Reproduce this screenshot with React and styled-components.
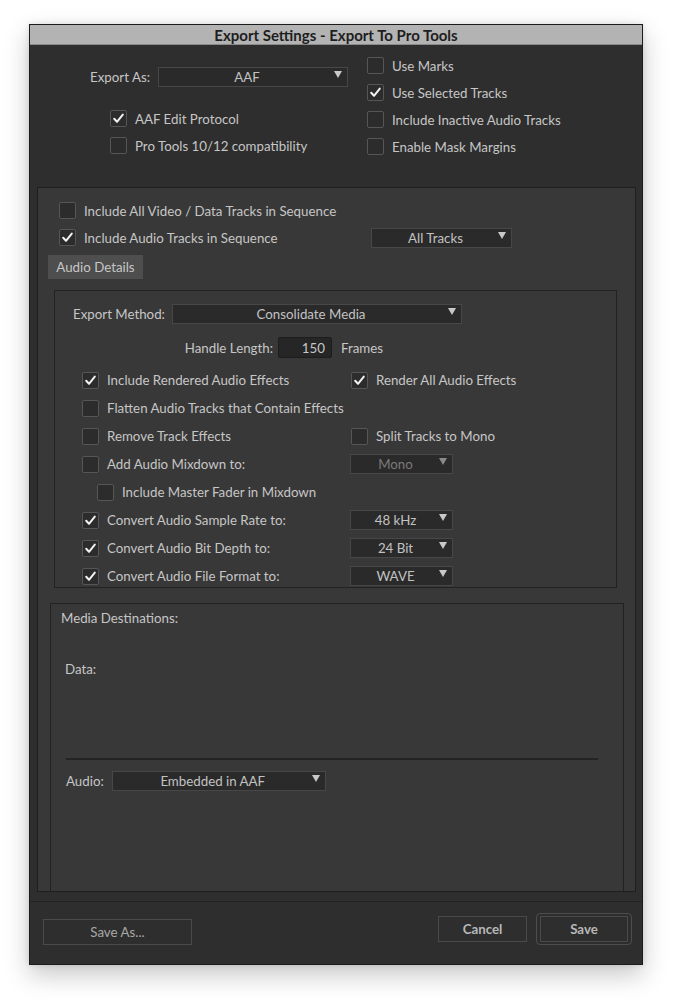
import styled, { createGlobalStyle } from 'styled-components';

const GlobalStyle = createGlobalStyle`
    *, *::before, *::after {
        box-sizing: border-box;
    }
    body {
        margin: 0;
        background: #ffffff;
        font-family: Lato, "Open Sans", sans-serif;
    }
`;

const Page = styled.div`
    padding: 24px 0 40px 29px;
`;

const Window = styled.div`
    width: 614px;
    height: 941px;
    background: #2e2e2e;
    border: 1px solid #1b1b1b;
    box-shadow: 0 10px 24px rgba(0, 0, 0, 0.22), 0 0 6px rgba(0, 0, 0, 0.12);
    display: flex;
    flex-direction: column;
    color: #c6c6c6;
    font-size: 13.3px;
`;

const TitleBar = styled.div`
    height: 20px;
    background: #b3b3b3;
    border-bottom: 1px solid #8a8a8a;
    color: #1e1e1e;
    font-size: 15px;
    font-weight: 700;
    display: flex;
    align-items: center;
    justify-content: center;
`;

const Top = styled.div`
    display: flex;
    height: 142px;
`;

const LeftCol = styled.div`
    width: 337px;
    padding-top: 22px;
`;

const RightCol = styled.div`
    padding-top: 7px;
`;

const FieldRow = styled.div`
    display: flex;
    align-items: center;
    gap: ${(p) => p.$gap || 8}px;
    height: ${(p) => p.$h || 20}px;
    padding-left: ${(p) => p.$indent || 0}px;
    margin-top: ${(p) => p.$mt || 0}px;
`;

const Label = styled.span`
    width: ${(p) => p.$w}px;
    text-align: right;
    white-space: nowrap;
`;

const CheckList = styled.div`
    padding-left: ${(p) => p.$indent || 0}px;
    margin-top: ${(p) => p.$mt || 0}px;
`;

const CheckRow = styled.div`
    display: flex;
    align-items: center;
    height: ${(p) => p.$h || 27}px;
    padding-left: ${(p) => p.$indent || 0}px;
`;

const Cell = styled.div`
    display: flex;
    align-items: center;
    gap: 8px;
    width: ${(p) => (p.$w ? `${p.$w}px` : 'auto')};
    white-space: nowrap;
`;

const Box = styled.span`
    width: 17px;
    height: 17px;
    border: 1px solid #565656;
    border-radius: 2px;
    background: #2c2c2c;
    display: flex;
    align-items: center;
    justify-content: center;
    flex-shrink: 0;
`;

const SelectBox = styled.div`
    position: relative;
    width: ${(p) => p.$w}px;
    height: 20px;
    background: #2a2a2a;
    border: 1px solid #474747;
    color: ${(p) => (p.$dim ? '#7a7a7a' : '#c2c2c2')};
    display: flex;
    align-items: center;
    justify-content: center;
    padding-right: 12px;
    margin-left: ${(p) => p.$ml || 0}px;
`;

const Arrow = styled.span`
    position: absolute;
    right: 5px;
    top: 3px;
    width: 0;
    height: 0;
    border-left: 4px solid transparent;
    border-right: 4px solid transparent;
    border-top: 7px solid ${(p) => (p.$dim ? '#8a8a8a' : '#c8c8c8')};
`;

const Panel = styled.div`
    margin: 0 6px 0 7px;
    height: 705px;
    background: #383838;
    border: 1px solid #1f1f1f;
    padding: 9px 0 0 10px;
    display: flex;
    flex-direction: column;
`;

const Tab = styled.div`
    width: 95px;
    height: 24px;
    margin-top: 4px;
    background: #4e4e4e;
    display: flex;
    align-items: center;
    justify-content: center;
`;

const Details = styled.div`
    width: 563px;
    height: 298px;
    margin: 11px 0 0 6px;
    border: 1px solid #222222;
    padding: 13px 0 0 18px;
`;

const NumberInput = styled.div`
    width: 54px;
    height: 21px;
    padding-right: 6px;
    background: #262626;
    border: 1px solid #1d1d1d;
    border-radius: 2px;
    display: flex;
    align-items: center;
    justify-content: flex-end;
`;

const Media = styled.div`
    flex: 1;
    width: 574px;
    margin: 15px 0 0 2px;
    border: 1px solid #222222;
    border-bottom: none;
    padding: 3px 0 0 10px;
`;

const Heading = styled.div`
    height: 22px;
    display: flex;
    align-items: center;
`;

const SubHeading = styled(Heading)`
    margin: 29px 0 0 4px;
`;

const Divider = styled.div`
    width: 532px;
    height: 2px;
    background: #232323;
    margin: 78px 0 0 5px;
`;

const Footer = styled.div`
    flex: 1;
    margin-top: 9px;
    border-top: 1px solid #222222;
    display: flex;
    align-items: flex-start;
    padding: 11px 10px 0 13px;
`;

const Button = styled.button`
    width: ${(p) => p.$w}px;
    height: 26px;
    margin-top: ${(p) => p.$mt || 0}px;
    background: #2e2e2e;
    border: 1px solid #4a4a4a;
    color: ${(p) => (p.$bold ? '#b8b8b8' : '#a8a8a8')};
    font-family: Lato, "Open Sans", sans-serif;
    font-size: 13.3px;
    font-weight: ${(p) => (p.$bold ? 700 : 400)};
    padding: 0;
`;

const Spacer = styled.div`
    flex: 1;
`;

const FocusRing = styled.div`
    margin-left: 9px;
    padding: 2px 3px;
    border: 1px solid #4d4d4d;
    border-radius: 4px;
`;

function Check({ on }) {
    return (
        <Box>
            {on && (
                <svg width="13" height="13" viewBox="0 0 13 13">
                    <polyline points="2.2,6.8 5,9.8 10.8,2.6" fill="none" stroke="#f2f2f2" strokeWidth="2" strokeLinecap="round" strokeLinejoin="round" />
                </svg>
            )}
        </Box>
    );
}

function CheckItem({ on, children, w }) {
    return (
        <Cell $w={w}>
            <Check on={on} />
            <span>{children}</span>
        </Cell>
    );
}

function Select({ w, children, dim, ml }) {
    return (
        <SelectBox $w={w} $dim={dim} $ml={ml}>
            {children}
            <Arrow $dim={dim} />
        </SelectBox>
    );
}

const audioRows = [
    { left: 'Include Rendered Audio Effects', on: true, right: { text: 'Render All Audio Effects', on: true } },
    { left: 'Flatten Audio Tracks that Contain Effects' },
    { left: 'Remove Track Effects', right: { text: 'Split Tracks to Mono' } },
    { left: 'Add Audio Mixdown to:', select: 'Mono', dim: true },
    { left: 'Include Master Fader in Mixdown', indent: 15 },
    { left: 'Convert Audio Sample Rate to:', on: true, select: '48 kHz' },
    { left: 'Convert Audio Bit Depth to:', on: true, select: '24 Bit' },
    { left: 'Convert Audio File Format to:', on: true, select: 'WAVE' },
];

function App() {
    return (
        <Page>
            <GlobalStyle />
            <Window>
                <TitleBar>Export Settings - Export To Pro Tools</TitleBar>
                <Top>
                    <LeftCol>
                        <FieldRow $indent={52}>
                            <Label $w={68}>Export As:</Label>
                            <Select w={190}>AAF</Select>
                        </FieldRow>
                        <CheckList $indent={80} $mt={18}>
                            <CheckRow><CheckItem on>AAF Edit Protocol</CheckItem></CheckRow>
                            <CheckRow><CheckItem>Pro Tools 10/12 compatibility</CheckItem></CheckRow>
                        </CheckList>
                    </LeftCol>
                    <RightCol>
                        <CheckRow><CheckItem>Use Marks</CheckItem></CheckRow>
                        <CheckRow><CheckItem on>Use Selected Tracks</CheckItem></CheckRow>
                        <CheckRow><CheckItem>Include Inactive Audio Tracks</CheckItem></CheckRow>
                        <CheckRow><CheckItem>Enable Mask Margins</CheckItem></CheckRow>
                    </RightCol>
                </Top>
                <Panel>
                    <CheckList $indent={11}>
                        <CheckRow><CheckItem>Include All Video / Data Tracks in Sequence</CheckItem></CheckRow>
                        <CheckRow>
                            <CheckItem on w={312}>Include Audio Tracks in Sequence</CheckItem>
                            <Select w={141}>All Tracks</Select>
                        </CheckRow>
                    </CheckList>
                    <Tab>Audio Details</Tab>
                    <Details>
                        <FieldRow $gap={9}>
                            <Label $w={90}>Export Method:</Label>
                            <Select w={290}>Consolidate Media</Select>
                        </FieldRow>
                        <FieldRow $h={21} $mt={13} $gap={5}>
                            <Label $w={200}>Handle Length:</Label>
                            <NumberInput>150</NumberInput>
                            <span style={{ marginLeft: 4 }}>Frames</span>
                        </FieldRow>
                        <CheckList $indent={9} $mt={8}>
                            {audioRows.map((r) => (
                                <CheckRow key={r.left} $h={28} $indent={r.indent}>
                                    <CheckItem on={r.on} w={269 - (r.indent || 0)}>{r.left}</CheckItem>
                                    {r.right && <CheckItem on={r.right.on}>{r.right.text}</CheckItem>}
                                    {r.select && <Select w={103} dim={r.dim} ml={-1}>{r.select}</Select>}
                                </CheckRow>
                            ))}
                        </CheckList>
                    </Details>
                    <Media>
                        <Heading>Media Destinations:</Heading>
                        <SubHeading>Data:</SubHeading>
                        <Divider />
                        <FieldRow $mt={11} $indent={5} $gap={8}>
                            <span>Audio:</span>
                            <Select w={214}>Embedded in AAF</Select>
                        </FieldRow>
                    </Media>
                </Panel>
                <Footer>
                    <Button $w={149} $mt={6}>Save As...</Button>
                    <Spacer />
                    <Button $w={89} $mt={3} $bold>Cancel</Button>
                    <FocusRing>
                        <Button $w={88} $bold>Save</Button>
                    </FocusRing>
                </Footer>
            </Window>
        </Page>
    );
}

export default App;
